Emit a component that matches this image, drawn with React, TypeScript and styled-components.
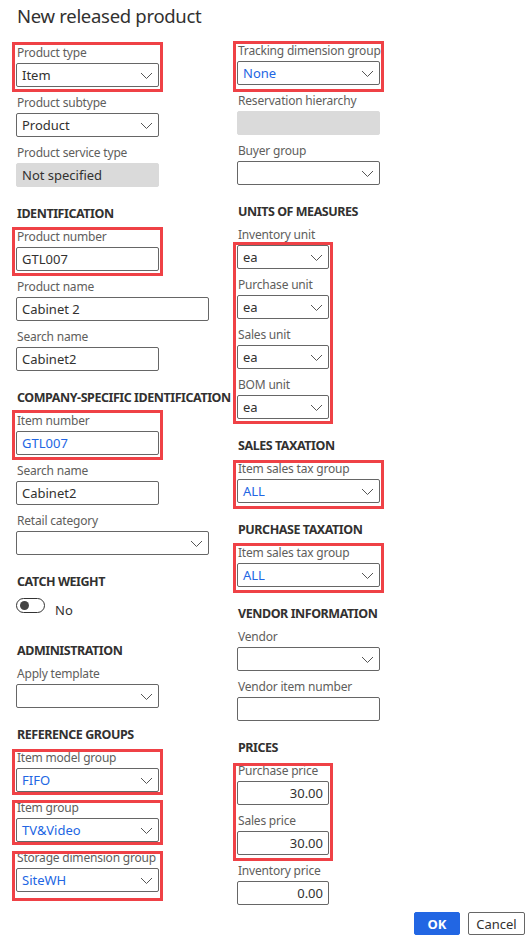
import React from 'react';
import styled, { createGlobalStyle } from 'styled-components';

const Global = createGlobalStyle`
  html, body { margin: 0; padding: 0; background: #ffffff; }
  body { font-family: "Noto Sans", "Open Sans", sans-serif; color: #323130; }
  * { box-sizing: border-box; }
`;

const Page = styled.div`
  width: 532px;
  min-height: 937px;
  padding: 3px 7px 0 16px;
`;

const Title = styled.h1`
  margin: 0;
  padding-left: 1px;
  font-size: 18.5px;
  font-weight: 400;
  letter-spacing: -0.3px;
  line-height: 26px;
  color: #323130;
`;

const Columns = styled.div`
  display: grid;
  grid-template-columns: 213px 1fr;
  column-gap: 8px;
  margin-top: 15px;
`;

const Column = styled.div<{ $shift?: number }>`
  display: flex;
  flex-direction: column;
  align-items: flex-start;
  margin-top: ${(p) => p.$shift ?? 0}px;
`;

const SectionHeading = styled.h2`
  margin: 12px 0 6px;
  padding-left: 1px;
  font-size: 12.5px;
  font-weight: 700;
  letter-spacing: -0.45px;
  line-height: 16px;
  color: #323130;
  white-space: nowrap;
`;

const FieldWrap = styled.div<{ $w: number }>`
  display: flex;
  flex-direction: column;
  width: ${(p) => p.$w}px;
  margin-bottom: 7px;
`;

const Label = styled.label`
  font-size: 12px;
  line-height: 18px;
  letter-spacing: -0.2px;
  margin-bottom: 1px;
  padding-left: 1px;
  color: #605e5c;
  white-space: nowrap;
`;

const InputBox = styled.div<{ $readonly?: boolean; $right?: boolean; $blue?: boolean }>`
  display: flex;
  align-items: center;
  justify-content: ${(p) => (p.$right ? 'flex-end' : 'space-between')};
  height: 24px;
  padding: 0 5px;
  border: 1px solid ${(p) => (p.$readonly ? '#dadada' : '#666666')};
  border-radius: 2px;
  background: ${(p) => (p.$readonly ? '#dadada' : '#ffffff')};
  font-size: 13px;
  line-height: 18px;
  color: ${(p) => (p.$blue ? '#2266e3' : '#323130')};
  white-space: nowrap;
`;

const Chevron = styled.svg`
  flex: none;
  margin-left: auto;
  margin-top: 2px;
`;

const Highlight = styled.div<{ $above: number; $below: number }>`
  position: relative;
  display: flex;
  flex-direction: column;
  &::after {
    content: '';
    position: absolute;
    top: ${(p) => -p.$above}px;
    bottom: ${(p) => 7 - p.$below}px;
    left: -4px;
    right: -4px;
    border: 3px solid #ef4146;
    pointer-events: none;
  }
`;

const ToggleRow = styled.div`
  display: flex;
  align-items: flex-start;
  gap: 10px;
  height: 26px;
  margin: 2px 0 7px;
`;

const Switch = styled.div`
  display: flex;
  align-items: center;
  width: 29px;
  height: 15px;
  padding: 0 3px;
  border: 1px solid #333333;
  border-radius: 8px;
  &::before {
    content: '';
    width: 9px;
    height: 9px;
    border-radius: 50%;
    background: #444444;
  }
`;

const ToggleText = styled.span`
  margin-top: 3px;
  font-size: 13px;
  line-height: 18px;
  color: #323130;
`;

const Footer = styled.div`
  display: flex;
  justify-content: flex-end;
  gap: 8px;
`;

const Button = styled.button<{ $primary?: boolean; $w: number }>`
  width: ${(p) => p.$w}px;
  height: 23px;
  padding: 0;
  border: 1px solid ${(p) => (p.$primary ? '#2266e3' : '#666666')};
  border-radius: 2px;
  background: ${(p) => (p.$primary ? '#2266e3' : '#ffffff')};
  color: ${(p) => (p.$primary ? '#ffffff' : '#323130')};
  font-family: "Noto Sans", "Open Sans", sans-serif;
  font-size: 13px;
  font-weight: ${(p) => (p.$primary ? 700 : 400)};
  line-height: 18px;
  cursor: pointer;
`;

type Kind = 'select' | 'text' | 'readonly' | 'number';

function Field({
  label,
  value = '',
  kind = 'text',
  w = 143,
  blue,
}: {
  label: string;
  value?: string;
  kind?: Kind;
  w?: number;
  blue?: boolean;
}) {
  return (
    <FieldWrap $w={w}>
      <Label>{label}</Label>
      <InputBox $readonly={kind === 'readonly'} $right={kind === 'number'} $blue={blue}>
        {kind === 'number' ? value : <span>{value}</span>}
        {kind === 'select' && (
          <Chevron width="13" height="8" viewBox="0 0 13 8">
            <path d="M1 1 L6.5 6.5 L12 1" fill="none" stroke="#555555" strokeWidth="1" />
          </Chevron>
        )}
      </InputBox>
    </FieldWrap>
  );
}

export default function App() {
  return (
    <Page>
      <Global />
      <Title>New released product</Title>
      <Columns>
        <Column>
          <Highlight $above={2} $below={5}>
            <Field label="Product type" value="Item" kind="select" />
          </Highlight>
          <Field label="Product subtype" value="Product" kind="select" />
          <Field label="Product service type" value="Not specified" kind="readonly" />

          <SectionHeading>IDENTIFICATION</SectionHeading>
          <Highlight $above={1} $below={5}>
            <Field label="Product number" value="GTL007" />
          </Highlight>
          <Field label="Product name" value="Cabinet 2" w={193} />
          <Field label="Search name" value="Cabinet2" />

          <SectionHeading>COMPANY-SPECIFIC IDENTIFICATION</SectionHeading>
          <Highlight $above={2} $below={5}>
            <Field label="Item number" value="GTL007" blue />
          </Highlight>
          <Field label="Search name" value="Cabinet2" />
          <Field label="Retail category" kind="select" w={193} />

          <SectionHeading>CATCH WEIGHT</SectionHeading>
          <ToggleRow>
            <Switch />
            <ToggleText>No</ToggleText>
          </ToggleRow>

          <SectionHeading>ADMINISTRATION</SectionHeading>
          <Field label="Apply template" kind="select" />

          <SectionHeading>REFERENCE GROUPS</SectionHeading>
          <Highlight $above={0} $below={3}>
            <Field label="Item model group" value="FIFO" kind="select" blue />
          </Highlight>
          <Highlight $above={-1} $below={3}>
            <Field label="Item group" value="TV&Video" kind="select" blue />
          </Highlight>
          <Highlight $above={-2} $below={9}>
            <Field label="Storage dimension group" value="SiteWH" kind="select" blue />
          </Highlight>
        </Column>

        <Column $shift={-2}>
          <Highlight $above={1} $below={7}>
            <Field label="Tracking dimension group" value="None" kind="select" blue />
          </Highlight>
          <Field label="Reservation hierarchy" kind="readonly" />
          <Field label="Buyer group" kind="select" />

          <SectionHeading>UNITS OF MEASURES</SectionHeading>
          <Highlight $above={-16} $below={5}>
            <Field label="Inventory unit" value="ea" kind="select" w={92} />
            <Field label="Purchase unit" value="ea" kind="select" w={92} />
            <Field label="Sales unit" value="ea" kind="select" w={92} />
            <Field label="BOM unit" value="ea" kind="select" w={92} />
          </Highlight>

          <SectionHeading>SALES TAXATION</SectionHeading>
          <Highlight $above={0} $below={6}>
            <Field label="Item sales tax group" value="ALL" kind="select" blue />
          </Highlight>

          <SectionHeading>PURCHASE TAXATION</SectionHeading>
          <Highlight $above={1} $below={6}>
            <Field label="Item sales tax group" value="ALL" kind="select" blue />
          </Highlight>

          <SectionHeading>VENDOR INFORMATION</SectionHeading>
          <Field label="Vendor" kind="select" />
          <Field label="Vendor item number" />

          <SectionHeading>PRICES</SectionHeading>
          <Highlight $above={-1} $below={6}>
            <Field label="Purchase price" value="30.00" kind="number" w={92} />
            <Field label="Sales price" value="30.00" kind="number" w={92} />
          </Highlight>
          <Field label="Inventory price" value="0.00" kind="number" w={92} />
        </Column>
      </Columns>
      <Footer>
        <Button $primary $w={46}>OK</Button>
        <Button $w={57}>Cancel</Button>
      </Footer>
    </Page>
  );
}
